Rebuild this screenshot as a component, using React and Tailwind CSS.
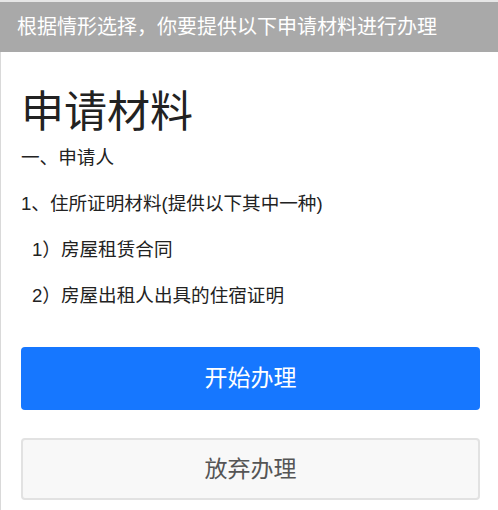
export default function App() {
    return (
        <div className="w-full h-[510px] overflow-hidden flex flex-col bg-white border-t-2 border-[#e6e6e6] font-['Liberation_Sans','Noto_Sans_CJK_SC',sans-serif]">
            <div className="h-[50px] shrink-0 bg-[#a9a9a9] flex items-center pl-[17px] text-white text-[20px] leading-none">
                根据情形选择，你要提供以下申请材料进行办理
            </div>

            <div className="flex-1 border-l border-[#d9d9d9] pl-5 pr-[18px]">
                <h1 className="mt-[36px] text-[43px] leading-[48px] text-[#222]">申请材料</h1>

                <div className="mt-[10px] flex flex-col gap-[22px] text-[18.6px] leading-[24px] text-[#222]">
                    <p>一、申请人</p>
                    <p>1、住所证明材料(提供以下其中一种)</p>
                    <p className="pl-[11px]">1）房屋租赁合同</p>
                    <p className="pl-[11px]">2）房屋出租人出具的住宿证明</p>
                </div>

                <button className="mt-[39px] w-full h-[63px] rounded-[4px] bg-[#1677ff] text-white text-[23px]">
                    开始办理
                </button>
                <button className="mt-[28px] w-full h-[62px] rounded-[4px] border-2 border-[#e2e2e2] bg-[#f8f8f8] text-[#555] text-[23px]">
                    放弃办理
                </button>
            </div>
        </div>
    );
}
